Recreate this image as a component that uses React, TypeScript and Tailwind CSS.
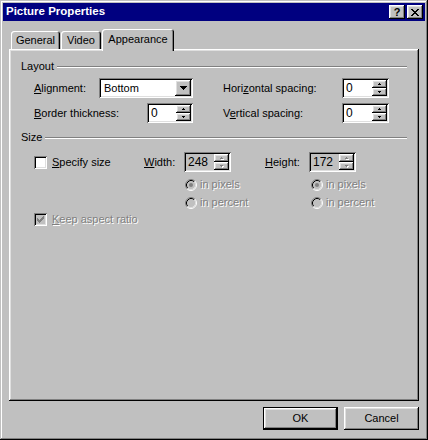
import type { ReactNode } from "react";

const raised =
  "shadow-[inset_-1px_-1px_0_#000,inset_1px_1px_0_#fff,inset_-2px_-2px_0_#808080,inset_2px_2px_0_#dfdfdf]";
const sunken =
  "shadow-[inset_1px_1px_0_#808080,inset_-1px_-1px_0_#fff,inset_2px_2px_0_#000,inset_-2px_-2px_0_#dfdfdf]";
const dim = "text-[#808080] [text-shadow:1px_1px_0_#fff]";

function U({ children }: { children: ReactNode }) {
  return <span className="underline underline-offset-[1px]">{children}</span>;
}

function Arrow({ up, disabled }: { up?: boolean; disabled?: boolean }) {
  const rows = up ? [[1, 0, 1], [0, 1, 3]] : [[0, 0, 3], [1, 1, 1]];
  return (
    <svg width="4" height="3" viewBox="0 0 4 3" className="block">
      {disabled &&
        rows.map(([x, y, w]) => (
          <rect key={"s" + y} x={x + 1} y={y + 1} width={w} height={1} fill="#fff" />
        ))}
      {rows.map(([x, y, w]) => (
        <rect key={y} x={x} y={y} width={w} height={1} fill={disabled ? "#808080" : "#000"} />
      ))}
    </svg>
  );
}

function Spin({ value, w, disabled }: { value: string; w: string; disabled?: boolean }) {
  return (
    <div className={`flex h-[20px] p-[2px] ${w} ${sunken} ${disabled ? "bg-[#c0c0c0]" : "bg-white"}`}>
      <div className="flex-1 pl-[2px] text-[12px] leading-[16px] text-black">{value}</div>
      <div className="flex w-[15px] flex-col">
        <div className={`flex h-[8px] items-center justify-center bg-[#c0c0c0] ${raised}`}>
          <Arrow up disabled={disabled} />
        </div>
        <div className={`flex h-[8px] items-center justify-center bg-[#c0c0c0] ${raised}`}>
          <Arrow disabled={disabled} />
        </div>
      </div>
    </div>
  );
}

function Combo({ value }: { value: string }) {
  return (
    <div className={`flex h-[20px] w-[94px] bg-white p-[2px] ${sunken}`}>
      <div className="flex-1 pl-[3px] leading-[16px]">{value}</div>
      <div className={`flex w-[16px] items-center justify-center bg-[#c0c0c0] ${raised}`}>
        <svg width="7" height="4" viewBox="0 0 7 4">
          <rect x="0" y="0" width="7" height="1" />
          <rect x="1" y="1" width="5" height="1" />
          <rect x="2" y="2" width="3" height="1" />
          <rect x="3" y="3" width="1" height="1" />
        </svg>
      </div>
    </div>
  );
}

function Check({ checked, disabled }: { checked?: boolean; disabled?: boolean }) {
  const marks = [
    [6, 0, 1], [5, 1, 2], [0, 2, 1], [4, 2, 3], [0, 3, 2], [3, 3, 3], [0, 4, 5], [1, 5, 3], [2, 6, 1],
  ];
  return (
    <div
      className={`flex h-[13px] w-[13px] shrink-0 items-center justify-center ${sunken} ${
        disabled ? "bg-[#c0c0c0]" : "bg-white"
      }`}
    >
      {checked && (
        <svg width="7" height="7" viewBox="0 0 7 7">
          {marks.map(([x, y, w], i) => (
            <rect key={i} x={x} y={y} width={w} height={1} fill={disabled ? "#808080" : "#000"} />
          ))}
        </svg>
      )}
    </div>
  );
}

function Radio({ checked }: { checked?: boolean }) {
  return (
    <svg width="12" height="12" viewBox="0 0 12 12" className="shrink-0">
      <circle cx="6" cy="6" r="5" fill="#c0c0c0" />
      <path d="M2.11 9.89A5.5 5.5 0 0 1 9.89 2.11" fill="none" stroke="#808080" />
      <path d="M9.89 2.11A5.5 5.5 0 0 1 2.11 9.89" fill="none" stroke="#fff" />
      <path d="M2.82 9.18A4.5 4.5 0 0 1 9.18 2.82" fill="none" stroke="#000" />
      <path d="M9.18 2.82A4.5 4.5 0 0 1 2.82 9.18" fill="none" stroke="#dfdfdf" />
      {checked && <circle cx="6" cy="6" r="2" fill="#808080" />}
    </svg>
  );
}

function Group({ title }: { title: string }) {
  return (
    <div className="flex h-[13px] items-center">
      <span className="leading-[13px]">{title}</span>
      <div className="ml-[3px] h-[2px] flex-1 border-t border-b border-t-[#808080] border-b-white" />
    </div>
  );
}

function Tab({ label, w, active }: { label: string; w: string; active?: boolean }) {
  return (
    <div
      className={`${w} flex justify-center rounded-t-[3px] bg-[#c0c0c0] shadow-[inset_1px_1px_0_#fff,inset_-1px_0_0_#000,inset_-2px_0_0_#808080] ${
        active ? "relative z-10 -mb-[2px] h-[22px] pt-[4px]" : "h-[18px] pt-[3px]"
      }`}
    >
      <span className="leading-[13px]">{label}</span>
    </div>
  );
}

function Button({ label, primary }: { label: string; primary?: boolean }) {
  return (
    <div className={`h-[23px] w-[75px] ${primary ? "border border-black" : ""}`}>
      <div className={`flex h-full w-full items-center justify-center bg-[#c0c0c0] ${raised}`}>{label}</div>
    </div>
  );
}

export default function App() {
  return (
    <div
      className={`h-[440px] w-[428px] bg-[#c0c0c0] p-[3px] font-['Liberation_Sans',Arial,sans-serif] text-[11px] text-black shadow-[inset_-1px_-1px_0_#000,inset_1px_1px_0_#c0c0c0,inset_-2px_-2px_0_#808080,inset_2px_2px_0_#fff]`}
    >
      <div className="flex h-[18px] items-center justify-between bg-[#000080] pl-[3px] pr-[2px]">
        <span className="text-[11.5px] font-bold text-white">Picture Properties</span>
        <div className="flex gap-[2px]">
          <div className={`flex h-[14px] w-[16px] items-center justify-center bg-[#c0c0c0] font-bold ${raised}`}>
            <span className="leading-[11px]">?</span>
          </div>
          <div className={`flex h-[14px] w-[16px] items-center justify-center bg-[#c0c0c0] ${raised}`}>
            <svg width="8" height="7" viewBox="0 0 8 7">
              <rect x="0" y="0" width="2" height="1" />
              <rect x="6" y="0" width="2" height="1" />
              <rect x="1" y="1" width="2" height="1" />
              <rect x="5" y="1" width="2" height="1" />
              <rect x="2" y="2" width="4" height="1" />
              <rect x="3" y="3" width="2" height="1" />
              <rect x="2" y="4" width="4" height="1" />
              <rect x="1" y="5" width="2" height="1" />
              <rect x="5" y="5" width="2" height="1" />
              <rect x="0" y="6" width="2" height="1" />
              <rect x="6" y="6" width="2" height="1" />
            </svg>
          </div>
        </div>
      </div>

      <div className="px-[6px]">
        <div className="mt-[8px] flex h-[20px] items-end gap-[1px] pl-[2px]">
          <Tab label="General" w="w-[49px]" />
          <Tab label="Video" w="w-[40px]" />
          <Tab label="Appearance" w="w-[72px]" active />
        </div>

        <div className={`h-[352px] w-[410px] bg-[#c0c0c0] pl-[12px] pr-[12px] pt-[11px] ${raised}`}>
          <Group title="Layout" />

          <div className="ml-[13px] mt-[5px] flex h-[20px] items-center">
            <span className="w-[65px]">
              <U>A</U>lignment:
            </span>
            <Combo value="Bottom" />
            <span className="ml-[30px] w-[119px]">
              Hori<U>z</U>ontal spacing:
            </span>
            <Spin value="0" w="w-[47px]" />
          </div>

          <div className="ml-[13px] mt-[5px] flex h-[20px] items-center">
            <span className="w-[113px]">
              <U>B</U>order thickness:
            </span>
            <Spin value="0" w="w-[46px]" />
            <span className="ml-[30px] w-[119px]">
              V<U>e</U>rtical spacing:
            </span>
            <Spin value="0" w="w-[47px]" />
          </div>

          <div className="mt-[8px]">
            <Group title="Size" />
          </div>

          <div className="ml-[13px] mt-[8px] flex h-[20px] items-center">
            <div className="flex w-[110px] items-center gap-[5px]">
              <Check />
              <span>
                <U>S</U>pecify size
              </span>
            </div>
            <span className="w-[40px]">
              <U>W</U>idth:
            </span>
            <Spin value="248" w="w-[47px]" disabled />
            <span className="ml-[34px] w-[44px]">
              <U>H</U>eight:
            </span>
            <Spin value="172" w="w-[47px]" disabled />
          </div>

          <div className="ml-[164px] mt-[6px] flex h-[13px] items-center">
            <div className="flex w-[126px] items-center gap-[3px]">
              <Radio checked />
              <span className={dim}>in pixels</span>
            </div>
            <div className="flex items-center gap-[3px]">
              <Radio checked />
              <span className={dim}>in pixels</span>
            </div>
          </div>

          <div className="ml-[164px] mt-[5px] flex h-[13px] items-center">
            <div className="flex w-[126px] items-center gap-[3px]">
              <Radio />
              <span className={dim}>in percent</span>
            </div>
            <div className="flex items-center gap-[3px]">
              <Radio />
              <span className={dim}>in percent</span>
            </div>
          </div>

          <div className="ml-[13px] mt-[4px] flex h-[13px] items-center gap-[5px]">
            <Check checked disabled />
            <span className={dim}>
              <U>K</U>eep aspect ratio
            </span>
          </div>
        </div>

        <div className="mt-[6px] flex w-[410px] justify-end gap-[6px]">
          <Button label="OK" primary />
          <Button label="Cancel" />
        </div>
      </div>
    </div>
  );
}
